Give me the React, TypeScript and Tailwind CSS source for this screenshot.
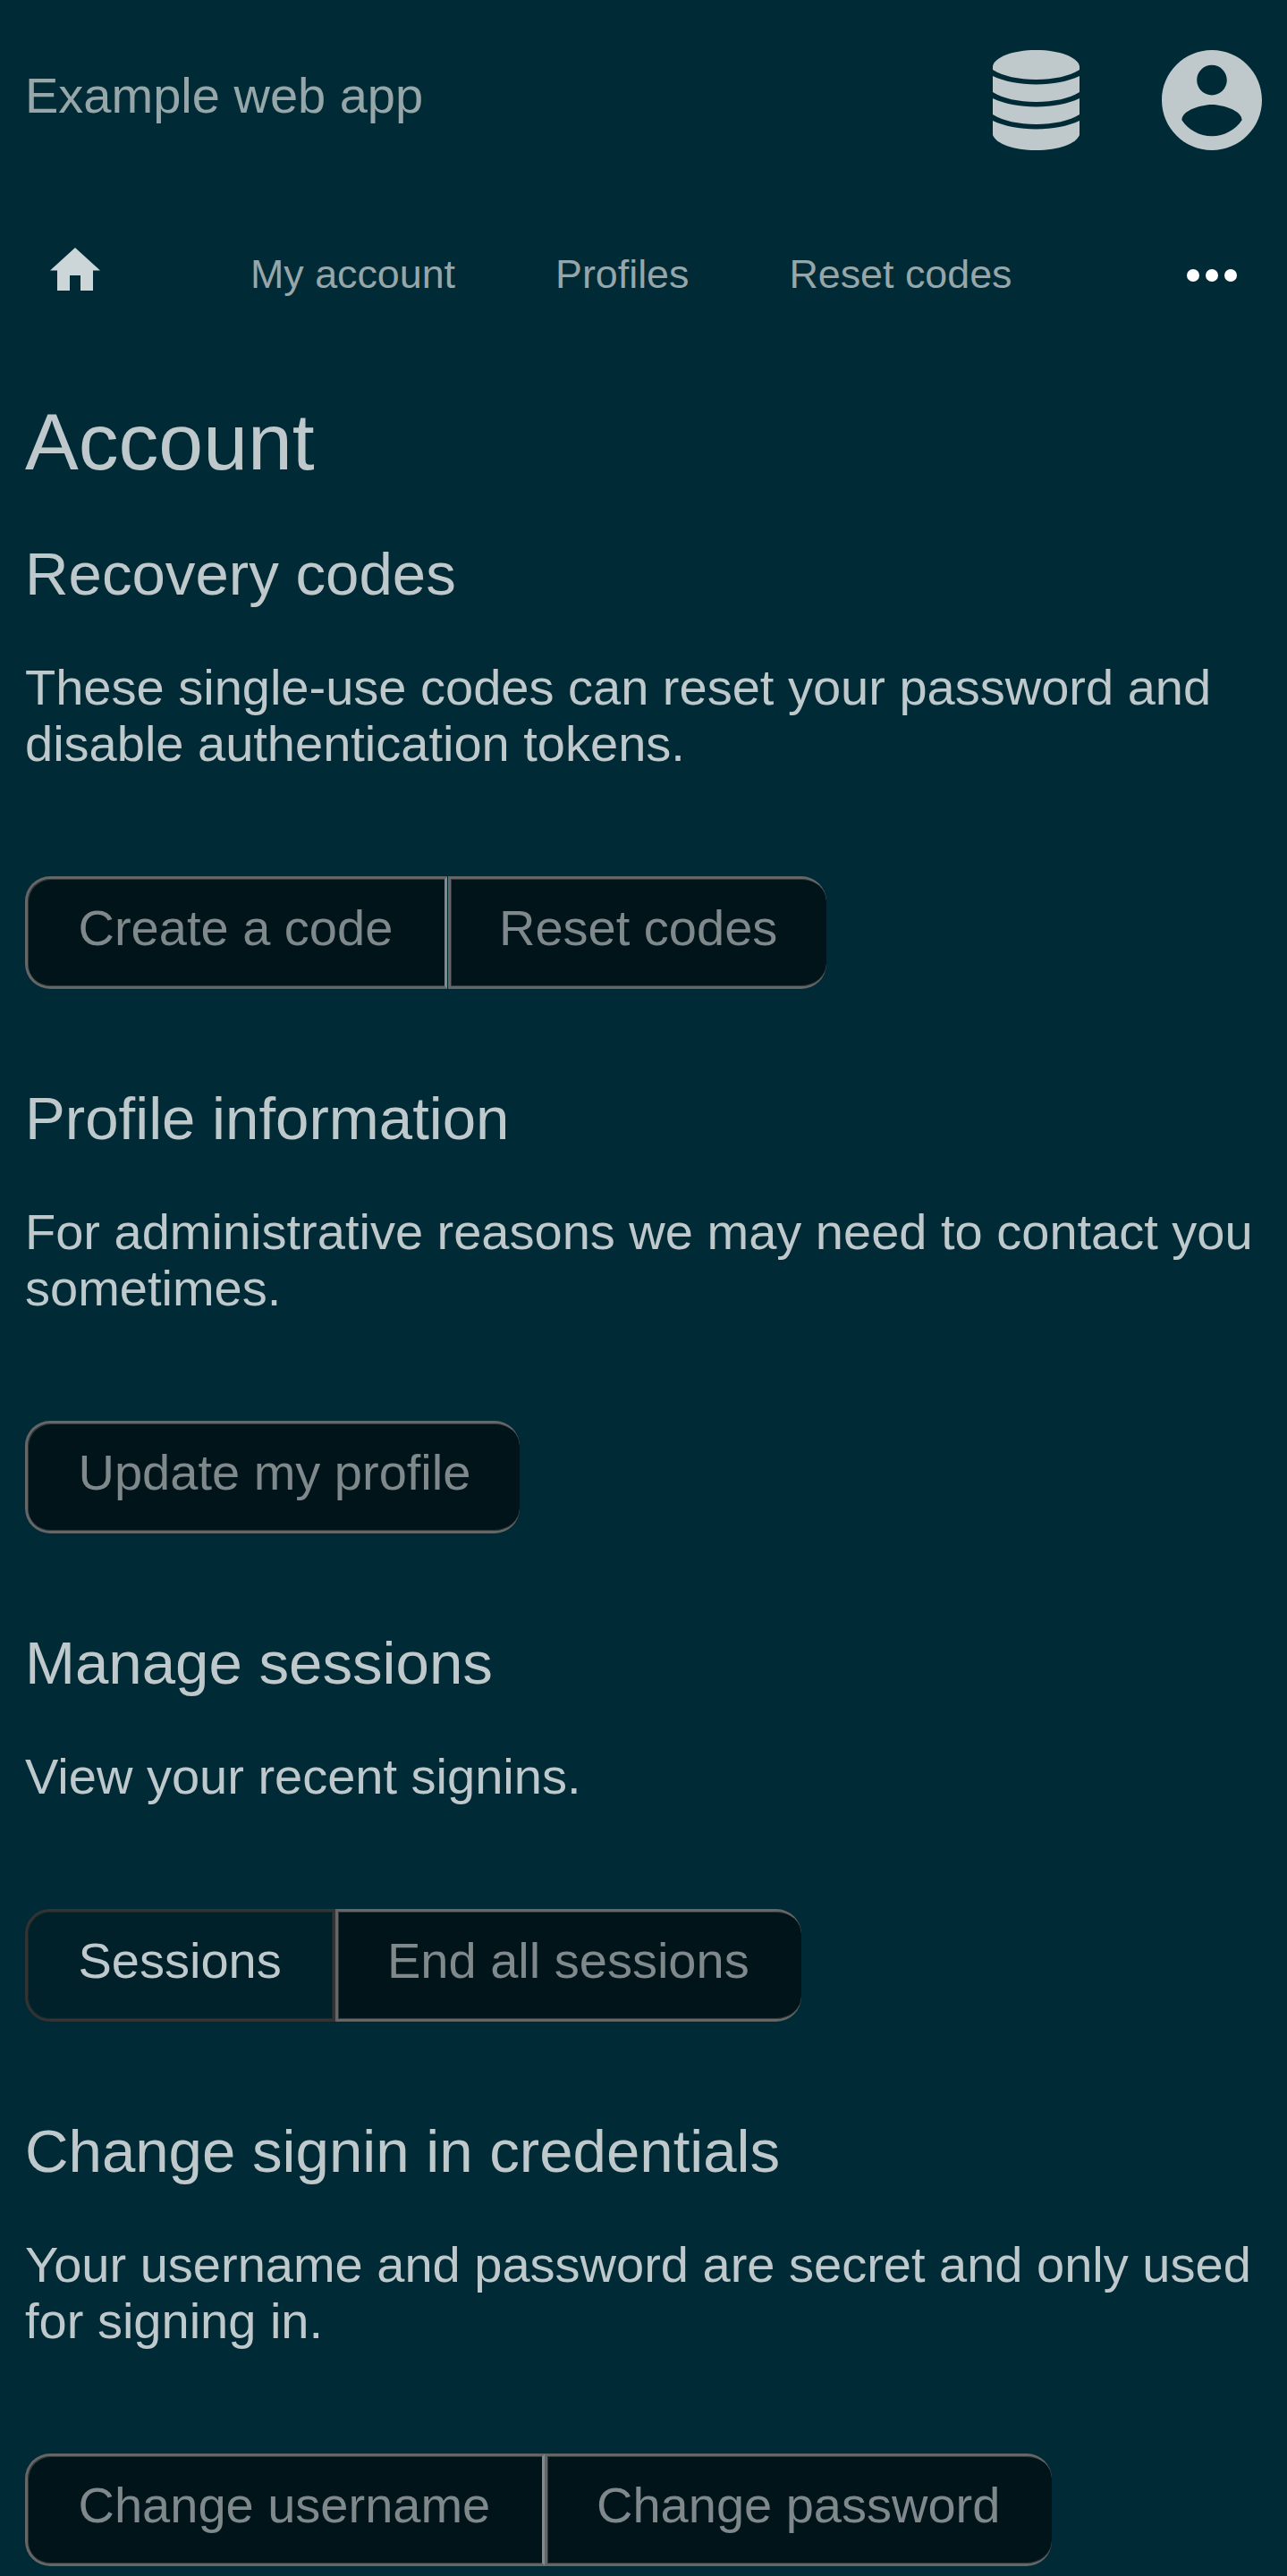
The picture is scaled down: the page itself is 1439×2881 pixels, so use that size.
import type { ReactNode } from "react";

const base = "flex h-[126px] border-[3px] pt-[23px] leading-[63px] whitespace-nowrap";
const first = "rounded-l-[28px] pl-[56.5px]";
const last = "rounded-r-[28px] border-r-0";
const dark = "bg-[#001419] text-[#7f898b] border-[#666] shadow-[inset_1px_1px_0_#2f393b,inset_0_-1px_0_#2f393b]";
const lit = "bg-[#002129] text-[#bfc9cc] border-[#333] shadow-[inset_0_0_0_1px_#1a2a2e]";

function Section({ title, text, children }: { title: string; text: ReactNode; children: ReactNode }) {
  return (
    <section className="mb-[106px]">
      <h2 className="text-[67.2px] leading-[77px]">{title}</h2>
      <p className="mt-[57px] leading-[63px]">{text}</p>
      <div className="mt-[117px] flex">{children}</div>
    </section>
  );
}

export default function App() {
  return (
    <div className="h-[2881px] w-[1439px] overflow-hidden bg-[#002b36] px-7 font-['Liberation_Sans',sans-serif] text-[56px] text-[#bfc9cc]">
      <header className="flex h-[224px] items-start pt-14">
        <div className="mt-[19px] flex-1 leading-[63px] text-[#96a6a9]">Example web app</div>
        <svg className="mr-[92px] h-[112px] w-[97px]" viewBox="0 0 97 112" fill="#bfc9cc">
          <path d="M0 18C2 8 22 0 48.500 0S95 8 97 18V22C86 29 68 33 48.500 33S11 29 0 22Z" />
          <path d="M0 29C13 35 30 38.500 48.500 38.500S84 35 97 29V47C86 54 68 58 48.500 58S11 54 0 47Z" />
          <path d="M0 54C13 60 30 63.500 48.500 63.500S84 60 97 54V72C86 79 68 83 48.500 83S11 79 0 72Z" />
          <path d="M0 79C13 85 30 88.500 48.500 88.500S84 85 97 79V95C93 105 74 112 48.500 112S4 105 0 95Z" />
        </svg>
        <svg className="h-[112px] w-[112px]" viewBox="2 2 20 20" fill="#bfc9cc">
          <path d="M12 2C6.480 2 2 6.480 2 12s4.480 10 10 10 10-4.480 10-10S17.520 2 12 2zm0 3c1.660 0 3 1.340 3 3s-1.340 3-3 3-3-1.340-3-3 1.340-3 3-3zm0 14.200c-2.500 0-4.710-1.280-6-3.220.03-1.990 4-3.080 6-3.080 1.990 0 5.970 1.090 6 3.080-1.290 1.940-3.500 3.220-6 3.220z" />
        </svg>
      </header>
      <nav className="flex h-[210px] items-start text-[44.8px] leading-[50px] text-[#96a6a9]">
        <svg className="mt-[53px] ml-7 h-[48px] w-14" viewBox="0 0 56 48" fill="#ccd5d7">
          <path d="M28 0L56 25.500H48V48H34V31H22V48H8V25.500H0Z" />
        </svg>
        <span className="mt-[57px] ml-[168px]">My account</span>
        <span className="mt-[57px] ml-28">Profiles</span>
        <span className="mt-[57px] ml-28">Reset codes</span>
        <svg className="mt-[77px] mr-7 ml-auto h-[14px] w-14" viewBox="0 0 56 14" fill="#fff">
          <circle cx="7" cy="7" r="7" />
          <circle cx="28" cy="7" r="7" />
          <circle cx="49" cy="7" r="7" />
        </svg>
      </nav>
      <main>
        <h1 className="mt-[10px] mb-[58px] text-[89.6px] leading-[101px]">Account</h1>
        <Section title="Recovery codes" text={<>These single-use codes can reset your password and<br />disable authentication tokens.</>}>
          <div className={`${base} ${first} ${dark} w-[472px] border-r-[#7f8b8d]`}>Create a code</div>
          <div className={`${base} ${last} ${dark} ml-px w-[423px] pl-[54px]`}>Reset codes</div>
        </Section>
        <Section title="Profile information" text={<>For administrative reasons we may need to contact you<br />sometimes.</>}>
          <div className={`${base} ${first} ${last} ${dark} w-[553px]`}>Update my profile</div>
        </Section>
        <Section title="Manage sessions" text="View your recent signins.">
          <div className={`${base} ${first} ${lit} w-[347px]`}>Sessions</div>
          <div className={`${base} ${last} ${dark} w-[521px] pl-[55px]`}>End all sessions</div>
        </Section>
        <Section title="Change signin in credentials" text={<>Your username and password are secret and only used<br />for signing in.</>}>
          <div className={`${base} ${first} ${dark} w-[581px] border-r-[#7f8b8d]`}>Change username</div>
          <div className={`${base} ${last} ${dark} w-[567px] pl-[55px]`}>Change password</div>
        </Section>
      </main>
    </div>
  );
}
